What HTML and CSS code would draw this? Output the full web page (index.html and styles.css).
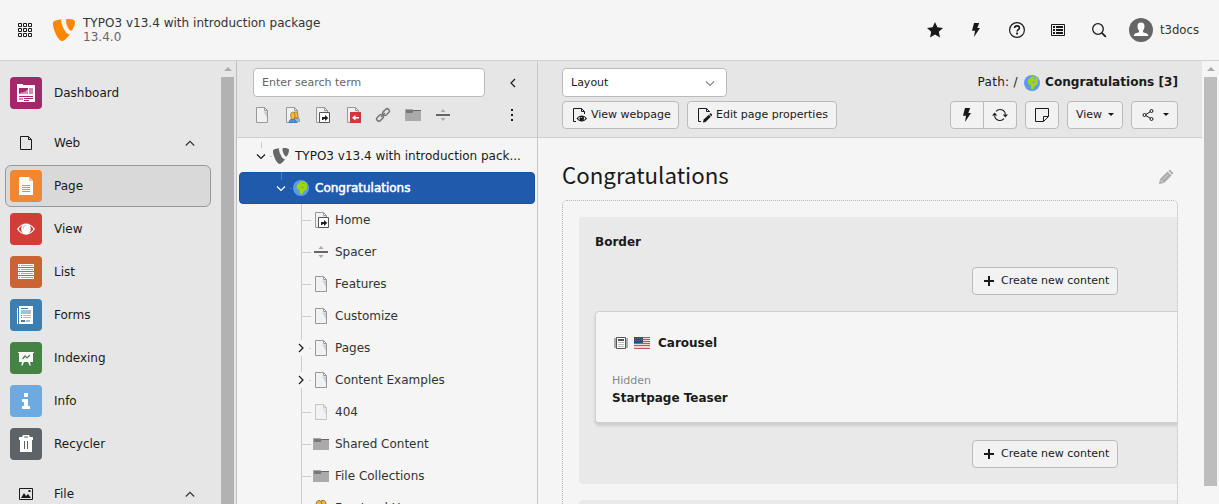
FILE: index.html
```html
<!DOCTYPE html>
<html lang="en">
<head>
<meta charset="utf-8">
<title>TYPO3 v13.4 with introduction package</title>
<link rel="stylesheet" href="styles.css">
</head>
<body>
<svg class="defs" width="0" height="0" aria-hidden="true">
  <symbol id="page" viewBox="0 0 16 16">
    <path d="M2.500.5h8l3 3v12h-11z" fill="#f1f1f1" stroke="#999"/>
    <path d="M9.500 4.500H13V11z" fill="#ccc"/>
    <path d="M10.500.5v3h3z" fill="#f6f6f6" stroke="#999"/>
  </symbol>
  <symbol id="folder" viewBox="0 0 16 16">
    <path d="M0 3h16v11H0z" fill="#aaa"/>
    <path d="M0 2h8v1H0z" fill="#aaa"/>
    <path d="M8 3h8v1H8z" fill="#666"/>
    <path d="M1 3h8L7.500 6H1z" fill="#777"/>
  </symbol>
  <symbol id="spacer" viewBox="0 0 16 16">
    <path d="M1 7h14v2H1z" fill="#666"/>
    <path d="M8 2l2.600 3H5.400zM8 14l2.600-3H5.400z" fill="#aaa"/>
  </symbol>
  <symbol id="users" viewBox="0 0 16 16">
    <path d="M8 9h6l2 3v2H8z" fill="#8bbce8" stroke="#6784a5" stroke-width=".7"/>
    <path d="M7 5c0-3 1-4.600 3-4.600S13 2 13 5l.6 4H7z" fill="#fcb83b" stroke="#6d572d" stroke-width=".8"/>
    <path d="M.5 15.500c0-3 1.500-5 5-5s5.500 2 5.500 5z" fill="#4a90e2" stroke="#315f96" stroke-width=".7"/>
    <path d="M3 6c0-3.500 1-5.500 3-5.500S9 2.500 9 6c0 3-1.200 5-3 5S3 9 3 6z" fill="#fcb83b" stroke="#6d572d" stroke-width=".8"/>
  </symbol>
  <symbol id="shortcut" viewBox="0 0 16 16">
    <use href="#page"/>
    <path d="M5.500 5.500h10v10h-10z" fill="#fff" stroke="#555"/>
    <path d="M8 13v-3h3V8l3.300 3-3.300 3v-2H9.500v1z" fill="#222"/>
  </symbol>
  <symbol id="globe" viewBox="0 0 16 16">
    <circle cx="8" cy="8" r="8" fill="#5b9bec"/>
    <path d="M4 5l4-3.700 4 .5L14 4l-.3 3 .3 2-1.500 1-2 1.500-1.500 3-1.800-.5-.6-4L5 9.200 3.800 8z" fill="#a4d50b"/>
    <path d="M7.200 6.500l3 .4 1.400 1.200-2.500-.2zM8.500 3.300l3-.3-.3 1.500z" fill="#5b9bec"/>
  </symbol>
  <symbol id="bolt" viewBox="0 0 16 16"><path d="M6 1h5.200L9.300 6H12L6 15l1-6.200H4z"/></symbol>
  <symbol id="up" viewBox="0 0 16 16"><path d="M3.800 10.500L8 6.300l4.200 4.200" fill="none" stroke="#333" stroke-width="1.200"/></symbol>
  <symbol id="down" viewBox="0 0 16 16"><path d="M4 6.500l4 4 4-4" fill="none" stroke="currentColor" stroke-width="1.200"/></symbol>
  <symbol id="right" viewBox="0 0 16 16"><path d="M6 4l4 4-4 4" fill="none" stroke="currentColor" stroke-width="1.200"/></symbol>
  <symbol id="shield" viewBox="0 0 22 22">
    <path d="M16.700 15.200c-.4.100-.7.100-1 .1-3.200 0-7.500-10.200-7.500-13.200 0-1.100.2-1.500.6-1.800C5 .7.500 1.900.1 3.200 0 3.700 0 4.400 0 5.200 0 9.900 5.100 22 9.200 22c2 0 5-3 7.500-6.800zM14.800 0c3.700 0 7.200.6 7.200 2.800 0 4.100-2.500 9-4 9-2.200 0-5-6.600-5-10 0-1.500.6-1.800 1.800-1.800z"/>
  </symbol>
  <symbol id="plus" viewBox="0 0 16 16"><path d="M7 3h2v4h4v2H9v4H7V9H3V7h4z"/></symbol>
</svg>

<header class="topbar">
  <svg class="apps" width="14" height="14" viewBox="0 0 14 14"><path d="M.5.500h3v3h-3zM5.500.5h3v3h-3zM10.500.5h3v3h-3zM.5 5.500h3v3h-3zM5.500 5.500h3v3h-3zM10.500 5.500h3v3h-3zM.5 10.500h3v3h-3zM5.500 10.500h3v3h-3zM10.500 10.500h3v3h-3z" fill="none" stroke="#1a1a1a"/></svg>
  <svg class="logo" width="22" height="22"><use href="#shield"/></svg>
  <div class="site"><div>TYPO3 v13.4 with introduction package</div><div class="version">13.4.0</div></div>
  <nav class="tools">
    <svg viewBox="0 0 16 16"><path d="M8 0l2.400 5.300 5.600.6-4.200 3.800L13 15.500l-5-3-5 3 1.200-5.800L0 5.900l5.600-.6z"/></svg>
    <svg><use href="#bolt"/></svg>
    <svg viewBox="0 0 16 16"><circle cx="8" cy="8" r="7.400" fill="none" stroke="#1a1a1a" stroke-width="1.200"/><path d="M5.600 6c.1-1.500 1.100-2.100 2.400-2.100 1.400 0 2.400.8 2.400 2 0 1.600-2.300 1.800-2.300 3.600" fill="none" stroke="#1a1a1a" stroke-width="1.600"/><path d="M7.200 10.600h1.800v1.800H7.200z"/></svg>
    <svg viewBox="0 0 16 16"><path d="M1.500 2.500h13v11h-13z" fill="none" stroke="#1a1a1a"/><path d="M3 4h2v2H3zM3 7h2v2H3zM3 10h2v2H3zM6 4h7v2H6zM6 7h7v2H6zM6 10h7v2H6z"/></svg>
    <svg viewBox="0 0 16 16"><circle cx="7" cy="7" r="5.300" fill="none" stroke="#1a1a1a" stroke-width="1.300"/><path d="M10.800 10.800l4 4" stroke="#1a1a1a" stroke-width="1.800"/></svg>
  </nav>
  <svg class="avatar" width="24" height="24" viewBox="0 0 24 24"><circle cx="12" cy="12" r="12" fill="#666"/><path d="M12 4.500c2.400 0 3.600 1.500 3.500 4-.1 2-.7 3.200-1.500 4v1.700l3.800 1.300c1 .4 1.400 1.200 1.400 2.500H4.800c0-1.300.4-2.100 1.400-2.500l3.800-1.300v-1.700c-.8-.8-1.400-2-1.500-4-.1-2.500 1.100-4 3.500-4z" fill="#fff"/></svg>
  <span class="user">t3docs</span>
</header>

<div class="workspace">
  <aside class="modules">
    <div class="menu">
      <div class="module"><span class="tile dash"><svg viewBox="0 0 32 32"><path d="M7 7h6v1h12v17H7z" fill="#fff"/><path d="M9 11h9v6H9z" fill="#a4276a"/><path d="M9 17c2-3 5 0 9-5v5z" fill="#d48cb5"/><path d="M19 11h4v6h-4zM9 21h4v2H9z" fill="#d48cb5"/><path d="M9 19h14v1H9zM14 21h9v1h-9zM14 23h5v1h-5zM14 7h5v1h-5zM20 7h5v1h-5z" fill="#a4276a"/></svg></span>Dashboard</div>
      <div class="module group"><span class="tile"><svg viewBox="0 0 32 32"><path d="M10.500 9.500h8l3 3v10h-11zM18.500 9.500v3h3" fill="none" stroke="#1a1a1a"/></svg></span>Web<svg class="caret" width="16" height="16"><use href="#up"/></svg></div>
      <div class="module active"><span class="tile pg"><svg viewBox="0 0 32 32"><path d="M9 7h10l4 4v14H9z" fill="#fff"/><path d="M19 7v4h4z" fill="#f7c195"/><path d="M12 15.500h8M12 17.500h8M12 19.500h8M12 21.500h8" stroke="#ef8733"/></svg></span>Page</div>
      <div class="module"><span class="tile vw"><svg viewBox="0 0 32 32"><path d="M7 16c5-7.500 13-7.500 18 0-5 7.500-13 7.500-18 0z" fill="#fff"/><path d="M8.700 16c1-1.700 2.400-2.900 3.400-3.500-1.700 3-.7 6.600 1 7.500-1.700-.6-3.500-2-4.400-4zM23.300 16c-1-1.700-2.400-2.900-3.400-3.500 1.700 3 .7 6.600-1 7.500 1.700-.6 3.500-2 4.400-4z" fill="#d03e37"/><path d="M15.500 12.500c-1.800.2-2.200 1.400-2 3" fill="none" stroke="#e8a09d"/></svg></span>View</div>
      <div class="module"><span class="tile ls"><svg viewBox="0 0 32 32"><path d="M8 8h16v3H8zM8 12h16v3H8zM8 16h16v3H8zM8 20h16v3H8z" fill="#fff"/><path d="M9 9.500h1m1 0h12M9 13.500h1m1 0h12M9 17.500h1m1 0h12M9 21.500h1m1 0h12" stroke="#dc9a78"/></svg></span>List</div>
      <div class="module"><span class="tile fm"><svg viewBox="0 0 32 32"><path d="M9 7h14v18H9zM7 9h1v16H7z" fill="#fff"/><path d="M11 9h7v1h-7zM11 16h1v1h-1zM11 18h1v1h-1zM11 21h4v2h-4z" fill="#397fb4"/><path d="M11 11h10v4H11zM13 16h8v1h-8zM13 18h8v1h-8zM16 21h4v2h-4z" fill="#9fc1dc"/></svg></span>Forms</div>
      <div class="module"><span class="tile ix"><svg viewBox="0 0 32 32"><path d="M8 10h16v1h-1v9H9v-9H8zM12 20h2l-1.500 3.500h-1.200zM18 20h2l.8 3.500h-1.200z" fill="#fff"/><path d="M12.500 17l2.500-3 2 2 3-3" fill="none" stroke="#448343" stroke-width="1.200"/></svg></span>Indexing</div>
      <div class="module"><span class="tile in"><svg viewBox="0 0 32 32"><path d="M14 8h4v4h-4zM12 14h6v7h2v3h-8v-3h2v-4h-2z" fill="#fff"/></svg></span>Info</div>
      <div class="module"><span class="tile rc"><svg viewBox="0 0 32 32"><path d="M9 9h3l1-2h6l1 2h3v3h-1v12H10V12H9z" fill="#fff"/><path d="M14 8.500h4v1h-4zM14 13h1v8h-1zM17 13h1v8h-1z" fill="#5d6366"/></svg></span>Recycler</div>
      <div class="module group"><span class="tile"><svg viewBox="0 0 32 32"><path d="M9.500 10.500h13v11h-13z" fill="none" stroke="#1a1a1a"/><path d="M11 20l3-5 2 3 2-2 3 4zM18.500 12h2v2h-2z"/></svg></span>File<svg class="caret" width="16" height="16"><use href="#up"/></svg></div>
    </div>
    <div class="scroll"><i class="arrow"></i><i class="thumb"></i></div>
  </aside>

  <section class="tree">
    <div class="toolbar">
      <div class="line">
        <input class="search" placeholder="Enter search term">
        <svg class="collapse" width="16" height="16" viewBox="0 0 16 16"><path d="M10 4L6 8l4 4" fill="none" stroke="#1a1a1a" stroke-width="1.200"/></svg>
      </div>
      <div class="newpages">
        <svg><use href="#page"/></svg>
        <svg viewBox="0 0 16 16"><use href="#page"/><g transform="translate(4.500 4.500) scale(.72)"><use href="#users" width="16" height="16"/></g></svg>
        <svg><use href="#shortcut"/></svg>
        <svg viewBox="0 0 16 16"><use href="#page"/><path d="M5 5h11v11H5z" fill="#c83c3c"/><path d="M14 10v1.400h-3.500v2L7 10.700 10.500 8v2z" fill="#fff"/></svg>
        <svg viewBox="0 0 16 16"><g fill="none" stroke="#777" stroke-width="1.500"><rect x="7.300" y="2.900" width="7.500" height="4.400" rx="2.200" transform="rotate(-45 11 5.100)"/><rect x="1.200" y="8.700" width="7.500" height="4.400" rx="2.200" transform="rotate(-45 5 10.900)"/><path d="M6 10l4-4"/></g></svg>
        <svg><use href="#folder"/></svg>
        <svg><use href="#spacer"/></svg>
        <svg class="more" viewBox="0 0 16 16"><path d="M7 2h2v2H7zM7 7h2v2H7zM7 12h2v2H7z"/></svg>
      </div>
    </div>
    <div class="nodes">
      <div class="node root"><svg class="guide" width="34" height="32"><path d="M22.500 2v6M31 16.500h2"/><use href="#down" x="14" y="8" width="16" height="16"/></svg><svg class="icon grey"><use href="#shield"/></svg><span class="title">TYPO3 v13.4 with introduction pack...</span></div>
      <div class="node selected"><svg class="guide" width="54" height="32"><path d="M42.500 0v8M51 16.500h2"/><use href="#down" x="34" y="8" width="16" height="16"/></svg><svg class="icon"><use href="#globe"/></svg><span>Congratulations</span></div>
      <div class="node"><svg class="guide" width="74" height="32"><path d="M62.500 0v32M62 16.500h10"/></svg><svg class="icon"><use href="#shortcut"/></svg><span>Home</span></div>
      <div class="node"><svg class="guide" width="74" height="32"><path d="M62.500 0v32M62 16.500h10"/></svg><svg class="icon"><use href="#spacer"/></svg><span>Spacer</span></div>
      <div class="node"><svg class="guide" width="74" height="32"><path d="M62.500 0v32M62 16.500h10"/></svg><svg class="icon"><use href="#page"/></svg><span>Features</span></div>
      <div class="node"><svg class="guide" width="74" height="32"><path d="M62.500 0v32M62 16.500h10"/></svg><svg class="icon"><use href="#page"/></svg><span>Customize</span></div>
      <div class="node"><svg class="guide" width="74" height="32"><path d="M62.500 0v8m0 16v8M70 16.500h2"/><use href="#right" x="54" y="8" width="16" height="16"/></svg><svg class="icon"><use href="#page"/></svg><span>Pages</span></div>
      <div class="node"><svg class="guide" width="74" height="32"><path d="M62.500 0v8m0 16v8M70 16.500h2"/><use href="#right" x="54" y="8" width="16" height="16"/></svg><svg class="icon"><use href="#page"/></svg><span>Content Examples</span></div>
      <div class="node"><svg class="guide" width="74" height="32"><path d="M62.500 0v32M62 16.500h10"/></svg><svg class="icon faded"><use href="#page"/></svg><span>404</span></div>
      <div class="node"><svg class="guide" width="74" height="32"><path d="M62.500 0v32M62 16.500h10"/></svg><svg class="icon"><use href="#folder"/></svg><span>Shared Content</span></div>
      <div class="node"><svg class="guide" width="74" height="32"><path d="M62.500 0v32M62 16.500h10"/></svg><svg class="icon"><use href="#folder"/></svg><span>File Collections</span></div>
      <div class="node"><svg class="guide" width="74" height="32"><path d="M62.500 0v32M62 16.500h10"/></svg><svg class="icon"><use href="#users"/></svg><span>Frontend Users</span></div>
    </div>
  </section>

  <main class="content">
    <div class="module-body">
      <div class="docheader">
        <div class="docrow top">
          <div class="select">Layout<svg width="16" height="16"><use href="#down"/></svg></div>
          <div class="path"><span>Path: / </span><svg width="16" height="16"><use href="#globe"/></svg><b>Congratulations [3]</b></div>
        </div>
        <div class="docrow buttons">
          <button class="btn view"><svg viewBox="0 0 16 16"><path d="M5 14.500H2.500v-13h8l3 3V7M10.500 1.500v3h3" fill="none" stroke="#1a1a1a"/><path d="M5.500 11.500c3-4 7.500-4 10.500 0-3 4-7.500 4-10.500 0z" fill="#1a1a1a"/><path d="M7 11.500c.7-1 1.200-1.400 1.900-1.700-.6 1.200-.5 2.500.2 3.400-.9-.4-1.500-.9-2.100-1.700zM14.500 11.500c-.7-1-1.200-1.400-1.900-1.700.6 1.200.5 2.500-.2 3.400.9-.4 1.500-.9 2.100-1.700zM9.800 10h1v1h-1z" fill="#f2f2f2"/></svg>View webpage</button>
          <button class="btn edit"><svg viewBox="0 0 16 16"><path d="M5 14.500H2.500v-13h8l3 3V5M10.500 1.500v3h3" fill="none" stroke="#1a1a1a"/><path d="M7 15.500l.6-2.900 5.200-4.800 2 2L9.600 15zM13.400 7.200l1.200-1.200 1.900 2-1.200 1.200z"/></svg>Edit page properties</button>
          <span class="spring"></span>
          <div class="joined"><button class="btn square"><svg><use href="#bolt"/></svg></button><button class="btn square"><svg viewBox="0 0 16 16"><path d="M4 4.300a5.400 5.400 0 0 1 9.400 3.200M12 11.700A5.400 5.400 0 0 1 2.600 8.500" fill="none" stroke="#1a1a1a" stroke-width="1.100"/><path d="M10.800 7.500H16l-2.700 3zM0 8.500h5.200L2.700 5.500z"/></svg></button></div>
          <button class="btn note"><svg viewBox="0 0 16 16"><path d="M1.500 1.500h13v8l-5 5h-8zM9.500 14.500v-5h5" fill="none" stroke="#1a1a1a"/></svg></button>
          <button class="btn menu-btn">View<i class="dropdown"></i></button>
          <button class="btn share"><svg viewBox="0 0 16 16"><path d="M11 4.300L5 8l6 3.700" fill="none" stroke="#1a1a1a"/><g fill="#f2f2f2" stroke="#1a1a1a"><circle cx="11.500" cy="4" r="1.500"/><circle cx="4.500" cy="8" r="1.500"/><circle cx="11.500" cy="12" r="1.500"/></g></svg><i class="dropdown"></i></button>
        </div>
      </div>
      <div class="page">
        <div class="headline"><h1>Congratulations</h1><svg width="16" height="16" viewBox="0 0 16 16"><path d="M1 15l1-5 7.500-7.500 4 4L6 14zM10.300 1.800L12 .8l3.200 3.200-1 1.700z" fill="#aaa"/><path d="M2.500 11l2.500 2.500M5 10.500l5-5" stroke="#f5f5f5" stroke-width=".7"/></svg></div>
        <div class="grid">
          <section class="column">
            <h2>Border</h2>
            <button class="btn create"><svg><use href="#plus"/></svg>Create new content</button>
            <article class="card">
              <div class="card-title">
                <svg width="16" height="16" viewBox="0 0 16 16"><path d="M1 3h2v10H1zM13 3h2v10h-2z" fill="#aaa"/><path d="M3.500 2.500h9v11h-9z" fill="#fff" stroke="#555"/><path d="M5 4h6v2H5z" fill="#555"/><path d="M5 7.500h6M5 9.500h6M5 11.500h6" stroke="#bbb"/></svg>
                <svg width="16" height="12" viewBox="0 0 16 12"><path d="M0 0h16v12H0z" fill="#eed7d7"/><path d="M0 .5h16M0 2.500h16M0 4.500h16M0 6.500h16M0 8.500h16M0 11.500h16" stroke="#bd5660"/><path d="M0 0h9v6H0z" fill="#344b7a"/><path d="M1 1.500h8M1 3.500h8" stroke="#526895" stroke-dasharray="1 1"/></svg>
                <b>Carousel</b>
              </div>
              <div class="label">Hidden</div>
              <b class="teaser">Startpage Teaser</b>
            </article>
            <button class="btn create"><svg><use href="#plus"/></svg>Create new content</button>
          </section>
          <section class="column"></section>
        </div>
      </div>
    </div>
    <div class="scroll main-scroll"><i class="arrow"></i><i class="thumb"></i></div>
  </main>
</div>
</body>
</html>
```
FILE: styles.css
```css
* { box-sizing: border-box; }
body {
  margin: 0; width: 1219px; height: 504px; overflow: hidden;
  display: flex; flex-direction: column;
  background: #f5f5f5; color: #1a1a1a; fill: #1a1a1a;
  font: 12px/18px Verdana, "DejaVu Sans", sans-serif;
}
svg { display: block; flex: none; }
.defs { position: absolute; }
button, input { font: inherit; color: inherit; }

.topbar { height: 60px; flex: none; display: flex; align-items: center; padding: 0 20px 0 18px; background: #f5f5f5; white-space: nowrap; }
.logo { margin-left: 21px; fill: #ff8700; }
.site { margin-left: 8px; line-height: 14px; letter-spacing: .02px; color: #333; }
.version { color: #666; }
.tools { margin-left: auto; display: flex; gap: 25px; }
.tools svg { width: 16px; height: 16px; }
.avatar { margin-left: 22px; }
.user { margin-left: 7px; color: #333; font-size: 11.700px; }

.workspace { flex: 1; min-height: 0; display: flex; border-top: 1px solid #d2d2d2; }
.modules { width: 237px; flex: none; display: flex; background: #e6e6e6; border-right: 1px solid #c0c0c0; overflow: hidden; }
.menu { width: 221px; padding: 11px 10px 0 5px; }
.module { height: 42px; margin-bottom: 1px; padding-left: 4px; display: flex; align-items: center; border: 1px solid transparent; border-radius: 6px; }
.module.group { margin-top: 8px; }
.module.active { background: #d9d9d9; border-color: #999; }
.tile { width: 32px; height: 32px; margin-right: 12px; border-radius: 4px; }
.dash { background: #a4276a; } .pg { background: #ef8733; } .vw { background: #d03e37; }
.ls { background: #cb6333; } .fm { background: #397fb4; } .ix { background: #448343; }
.in { background: #6daae0; } .rc { background: #5d6366; }
.caret { margin-left: auto; margin-right: 12px; }

.scroll { width: 13px; display: flex; flex-direction: column; align-items: center; }
.arrow { height: 10px; flex: none; border: 4px solid transparent; border-top-width: 6px; border-bottom: 4px solid #acacac; margin-bottom: 6px; }
.thumb { flex: 1; width: 13px; background: #b2b2b2; }

.tree { width: 301px; flex: none; display: flex; flex-direction: column; border-right: 1px solid #c8c8c8; overflow: hidden; }
.toolbar { height: 77px; flex: none; padding: 7px 16px 0; background: #e6e6e6; border-bottom: 1px solid #cfcfcf; }
.line { display: flex; align-items: center; }
.search { width: 232px; height: 29px; padding: 0 8px; border: 1px solid #bbb; border-radius: 4px; background: #fff; font-size: 11px; }
.search::placeholder { color: #666; opacity: 1; }
.collapse { margin-left: 20px; }
.newpages { display: flex; gap: 14.200px; margin: 10px 0 0 1px; }
.newpages svg { width: 16px; height: 16px; }
.newpages .more { margin-left: auto; margin-right: 1px; }
.nodes { padding: 2px 2px 0; }
.node { height: 32px; display: flex; align-items: center; border-radius: 4px; color: #333; white-space: nowrap; }
.root { color: #1a1a1a; }
.guide { stroke: #ccc; color: #1a1a1a; fill: none; }
.icon { width: 16px; height: 16px; margin-right: 6px; }
.grey { fill: #666; }
.faded { opacity: .5; }
.selected { background: #1f5aad; border: 1px solid #15539f; color: #fff; }
.selected .guide { color: #fff; stroke: #4b7cc0; margin-left: -1px; }
.selected span { -webkit-text-stroke: .5px #fff; }

.content { flex: 1; min-width: 0; display: flex; overflow: hidden; }
.module-body { width: 664px; flex: none; }
.docheader { height: 77px; padding: 7px 24px 0; background: #e6e6e6; border-bottom: 1px solid #cfcfcf; }
.docrow { display: flex; align-items: center; }
.docrow.top { justify-content: space-between; }
.select { width: 165px; height: 29px; padding: 0 8px; display: flex; align-items: center; justify-content: space-between; background: #fff; border: 1px solid #bbb; border-radius: 4px; font-size: 11px; }
.select svg { color: #888; }
.path { display: flex; align-items: center; white-space: pre; margin-top: -2px; }
.path span { letter-spacing: .3px; }
.path svg { margin: 3px 5px 0 2px; }
.path b { font-size: 12.100px; }
.buttons { margin-top: 4px; }
.btn { height: 28px; padding: 0 7px; display: flex; align-items: center; background: #f2f2f2; border: 1px solid #bbb; border-radius: 4px; font-size: 11px; white-space: nowrap; }
.btn svg { width: 16px; height: 16px; }
.view { width: 117px; gap: 4px; padding-left: 8px; }
.edit { width: 150px; gap: 4px; margin-left: 8px; padding-left: 8px; }
.spring { flex: 1; }
.joined { display: flex; }
.square { width: 34px; padding: 0 8px; }
.square:first-child { border-radius: 4px 0 0 4px; }
.square:last-child { width: 33px; border-left: 0; border-radius: 0 4px 4px 0; }
.note { width: 34px; margin-left: 8px; padding: 0 8px; }
.menu-btn { width: 56px; margin-left: 8px; padding-left: 8px; }
.share { width: 47px; margin-left: 8px; padding-left: 8px; }
.dropdown { margin: -1px 0 0 6px; border: 3px solid transparent; border-top-color: #1a1a1a; border-bottom: 0; }
.share .dropdown { margin-left: 7px; }

.page { padding: 22px 24px 0; }
.headline { height: 40px; display: flex; justify-content: space-between; padding-right: 4px; }
.headline svg { margin-top: 9px; }
h1 { margin: 0; font: 400 22.300px/28px "Noto Sans CJK JP", "Noto Sans", sans-serif; }
.grid { height: 320px; padding: 16px 0 0 16px; border: 1px dotted #b5b5b5; border-radius: 5px; overflow: hidden; }
.column { width: 640px; height: 267px; margin-bottom: 16px; padding: 16px; background: #e9e9e9; border-radius: 4px; }
h2 { margin: 0; font-size: 12px; line-height: 18px; }
.create { width: 146px; gap: 4px; padding-left: 8px; margin: 16px 0 16px 377px; }
.card { width: 620px; height: 113px; padding: 22px 16px 0; background: #f5f5f5; border: 1px solid #d0d0d0; border-bottom-width: 2px; border-radius: 4px; box-shadow: 0 2px 3px rgba(0,0,0,.12); }
.card-title { display: flex; align-items: center; gap: 5px; padding-left: 1px; }
.card-title b { margin-left: 3px; }
.label { margin-top: 20px; font-size: 11px; color: #888; }
.teaser { display: block; line-height: 16px; }

.main-scroll { width: 17px; background: #f5f5f5; }
.main-scroll .thumb { background: #bdbdbd; flex: none; height: 409px; }
```
